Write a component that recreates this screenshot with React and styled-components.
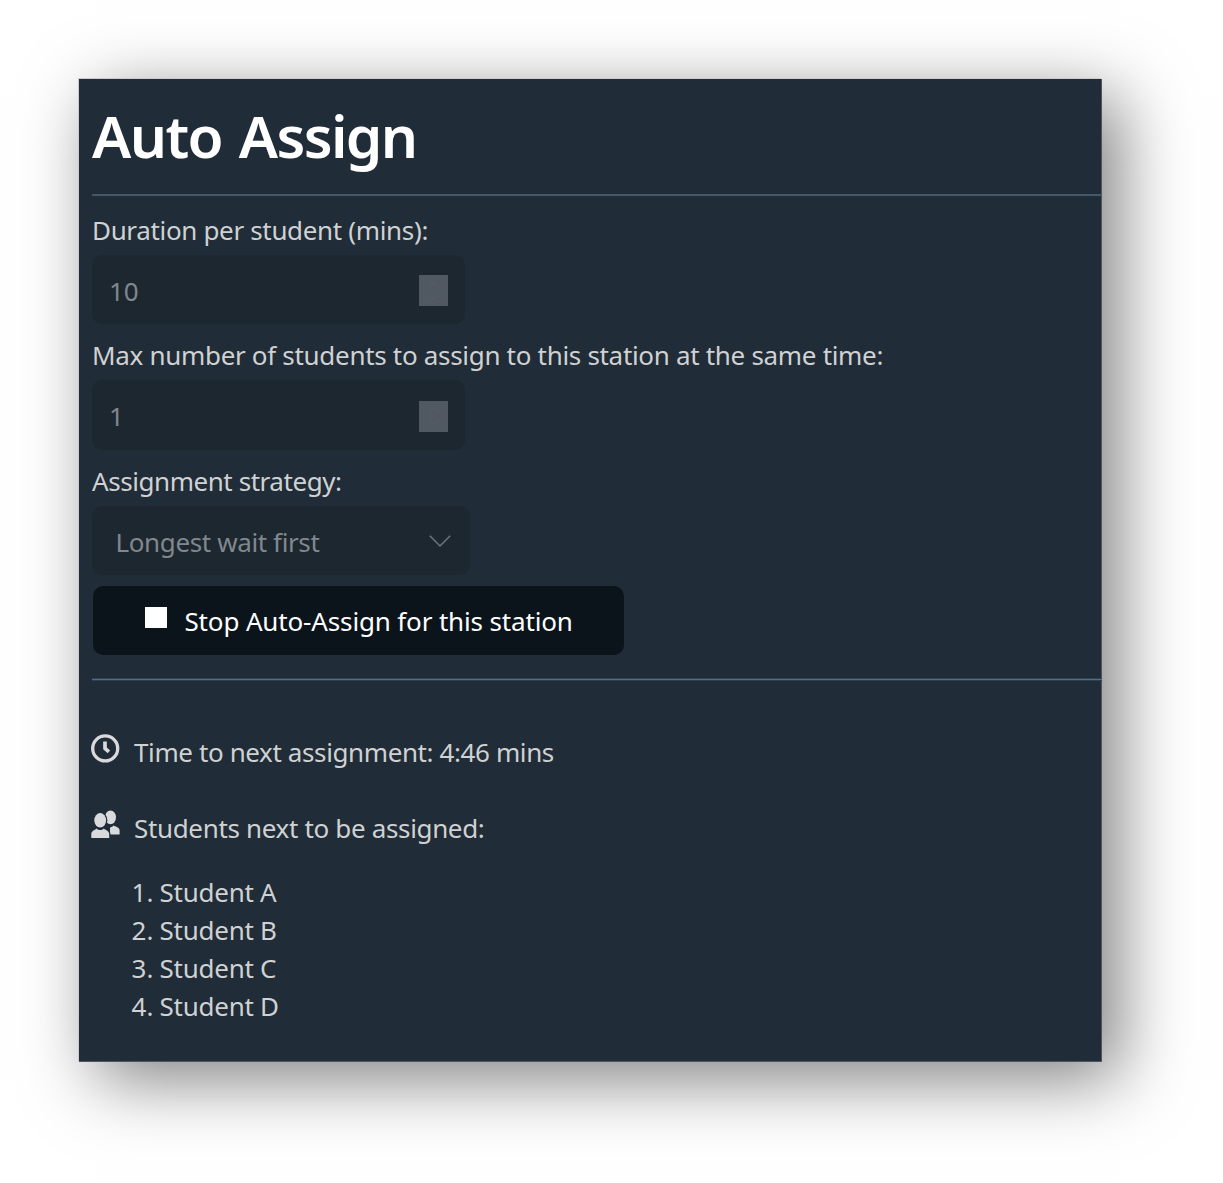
import React from "react";
import styled, { createGlobalStyle } from "styled-components";

const colors = {
  panel: "#202c37",
  field: "#1d2730",
  button: "#0c141b",
  text: "#cfd1d2",
  muted: "#80878d",
  rule: "#43586b",
};

const GlobalStyle = createGlobalStyle`
  body {
    margin: 0;
    background: #fff;
    font-family: "Noto Sans", "Open Sans", sans-serif;
    font-size: 26px;
    line-height: 36px;
    color: ${colors.text};
  }
  *, *::before, *::after { box-sizing: border-box; }
`;

const Page = styled.main`
  padding: 79px 0 0 79px;
  height: 1183px;
  overflow: hidden;
`;

const Panel = styled.section`
  width: 1023px;
  height: 983px;
  padding-left: 13px;
  background: ${colors.panel};
  border-right: 1px solid #4d5661;
  border-bottom: 1px solid #4d5661;
  box-shadow: -1px -1px 0 0 #cbcbcb, 17px 17px 66px rgba(0, 0, 0, 0.5);
`;

const Text = styled.span`
  letter-spacing: ${(p) => p.$track || 0}px;
  white-space: nowrap;
`;

const Title = styled.h1`
  margin: 0;
  padding-top: 1px;
  height: 115px;
  font-size: 58.5px;
  line-height: 110px;
  font-weight: 600;
  letter-spacing: -1.6px;
  word-spacing: 3px;
  color: #fff;
`;

const TopRule = styled.hr`
  height: 2px;
  margin: 0 -1px 0 0;
  border: 0;
  background: ${colors.rule};
`;

const BottomRule = styled.hr`
  height: 3px;
  margin: 23px -1px 0 0;
  border: 0;
  background: linear-gradient(#2f4151 1px, #526d85 1px 2px, #2f4151 2px);
`;

const Form = styled.form`
  display: flex;
  flex-direction: column;
  align-items: flex-start;
  gap: 13px;
  padding-top: 15.8px;
`;

const Field = styled.label`
  display: flex;
  flex-direction: column;
  gap: 7px;
`;

const Control = styled.span`
  display: flex;
  align-items: center;
  justify-content: space-between;
  width: ${(p) => p.$width}px;
  height: 69.5px;
  padding: ${(p) => p.$padding};
  border-radius: 10px;
  background: ${colors.field};
  color: ${colors.muted};
`;

const Spinner = styled.span`
  display: flex;
  align-items: center;
  justify-content: center;
  width: 29px;
  height: 31px;
  background: #505861;
`;

const StopButton = styled.button`
  display: flex;
  align-items: center;
  gap: 18px;
  width: 531.5px;
  height: 69.5px;
  margin: -2.8px 0 0 0.5px;
  padding: 2px 0 0 52px;
  border: 0;
  border-radius: 10px;
  background: ${colors.button};
  color: #fff;
  font: inherit;
`;

const StopSquare = styled.span`
  width: 22px;
  height: 21px;
  margin-bottom: 7px;
  background: #fff;
`;

const Status = styled.div`
  display: flex;
  flex-direction: column;
  gap: 40px;
  padding-top: 52.5px;
`;

const StatusRow = styled.div`
  display: flex;
  align-items: flex-start;
  gap: 14px;
  height: 36px;
  margin-left: -1px;
`;

const Icon = styled.svg`
  flex: none;
  width: 29px;
  height: 29px;
  margin-top: ${(p) => p.$top || 0}px;
`;

const Queue = styled.ol`
  margin: 27.6px 0 0;
  padding: 0 0 0 39.5px;
  list-style: none;
  line-height: 38px;
`;

const QueueItem = styled.li`
  display: grid;
  grid-template-columns: 28px auto;
  justify-content: start;
`;

const SpinnerArrows = () => (
  <svg width="13" height="22" viewBox="0 0 13 22" fill="none" stroke="#555b64" strokeWidth="2">
    <path d="M1.5 7.5 6.5 2.5l5 5M1.5 14.5l5 5 5-5" />
  </svg>
);

const Chevron = () => (
  <svg width="22" height="14" viewBox="0 0 22 14" fill="none" stroke="#70787f" strokeWidth="1.4">
    <path d="M.8.7 11 11.1 21.2.7" />
  </svg>
);

const ClockIcon = () => (
  <Icon viewBox="0 0 29 29" fill="none" stroke="#d9dadb">
    <circle cx="14.2" cy="14.4" r="12.5" strokeWidth="3.3" />
    <path d="M14 7.6v6.8l3.9 3.5" strokeWidth="3.7" />
  </Icon>
);

const PeopleIcon = () => (
  <Icon $top={0.5} viewBox="0 0 29 29" fill="#d9dadb">
    <ellipse cx="19.5" cy="7.3" rx="5.5" ry="6.9" />
    <path d="M19 17.6c1.2-.4 2.8-.9 3.6-2 1.800 1.400 6 1.400 6 5v3.900H19z" />
    <path
      d="M.3 28v-3.800c0-3.700 3.100-3.600 5.300-5.800 1 1.100 2.200 1.700 3.600 1.700s2.600-.6 3.600-1.700c2.200 2.200 5.400 2.100 5.400 5.800V28z"
      stroke={colors.panel}
      strokeWidth="2.600"
      paintOrder="stroke"
    />
    <ellipse cx="9.200" cy="10.300" rx="5.900" ry="7.200" stroke={colors.panel} strokeWidth="2.600" paintOrder="stroke" />
  </Icon>
);

const numberFields = [
  { label: "Duration per student (mins):", value: "10", track: -0.34 },
  {
    label: "Max number of students to assign to this station at the same time:",
    value: "1",
    track: -0.31,
  },
];

const students = ["Student A", "Student B", "Student C", "Student D"];

export default function App() {
  return (
    <>
      <GlobalStyle />
      <Page>
        <Panel>
          <Title>Auto Assign</Title>
          <TopRule />
          <Form>
            {numberFields.map((f) => (
              <Field key={f.label}>
                <Text $track={f.track}>{f.label}</Text>
                <Control $width={372.5} $padding="2px 16.5px 0 17px">
                  <Text>{f.value}</Text>
                  <Spinner>
                    <SpinnerArrows />
                  </Spinner>
                </Control>
              </Field>
            ))}
            <Field>
              <Text $track={-0.44}>Assignment strategy:</Text>
              <Control $width={377.5} $padding="2px 19px 0 23.5px">
                <Text $track={-0.38}>Longest wait first</Text>
                <Chevron />
              </Control>
            </Field>
            <StopButton type="button">
              <StopSquare />
              <Text $track={-0.15}>Stop Auto-Assign for this station</Text>
            </StopButton>
          </Form>
          <BottomRule />
          <Status>
            <StatusRow>
              <ClockIcon />
              <Text $track={-0.39}>Time to next assignment: 4:46 mins</Text>
            </StatusRow>
            <StatusRow>
              <PeopleIcon />
              <Text $track={-0.34}>Students next to be assigned:</Text>
            </StatusRow>
          </Status>
          <Queue>
            {students.map((name, i) => (
              <QueueItem key={name}>
                <Text>{i + 1}.</Text>
                <Text $track={-0.25}>{name}</Text>
              </QueueItem>
            ))}
          </Queue>
        </Panel>
      </Page>
    </>
  );
}
